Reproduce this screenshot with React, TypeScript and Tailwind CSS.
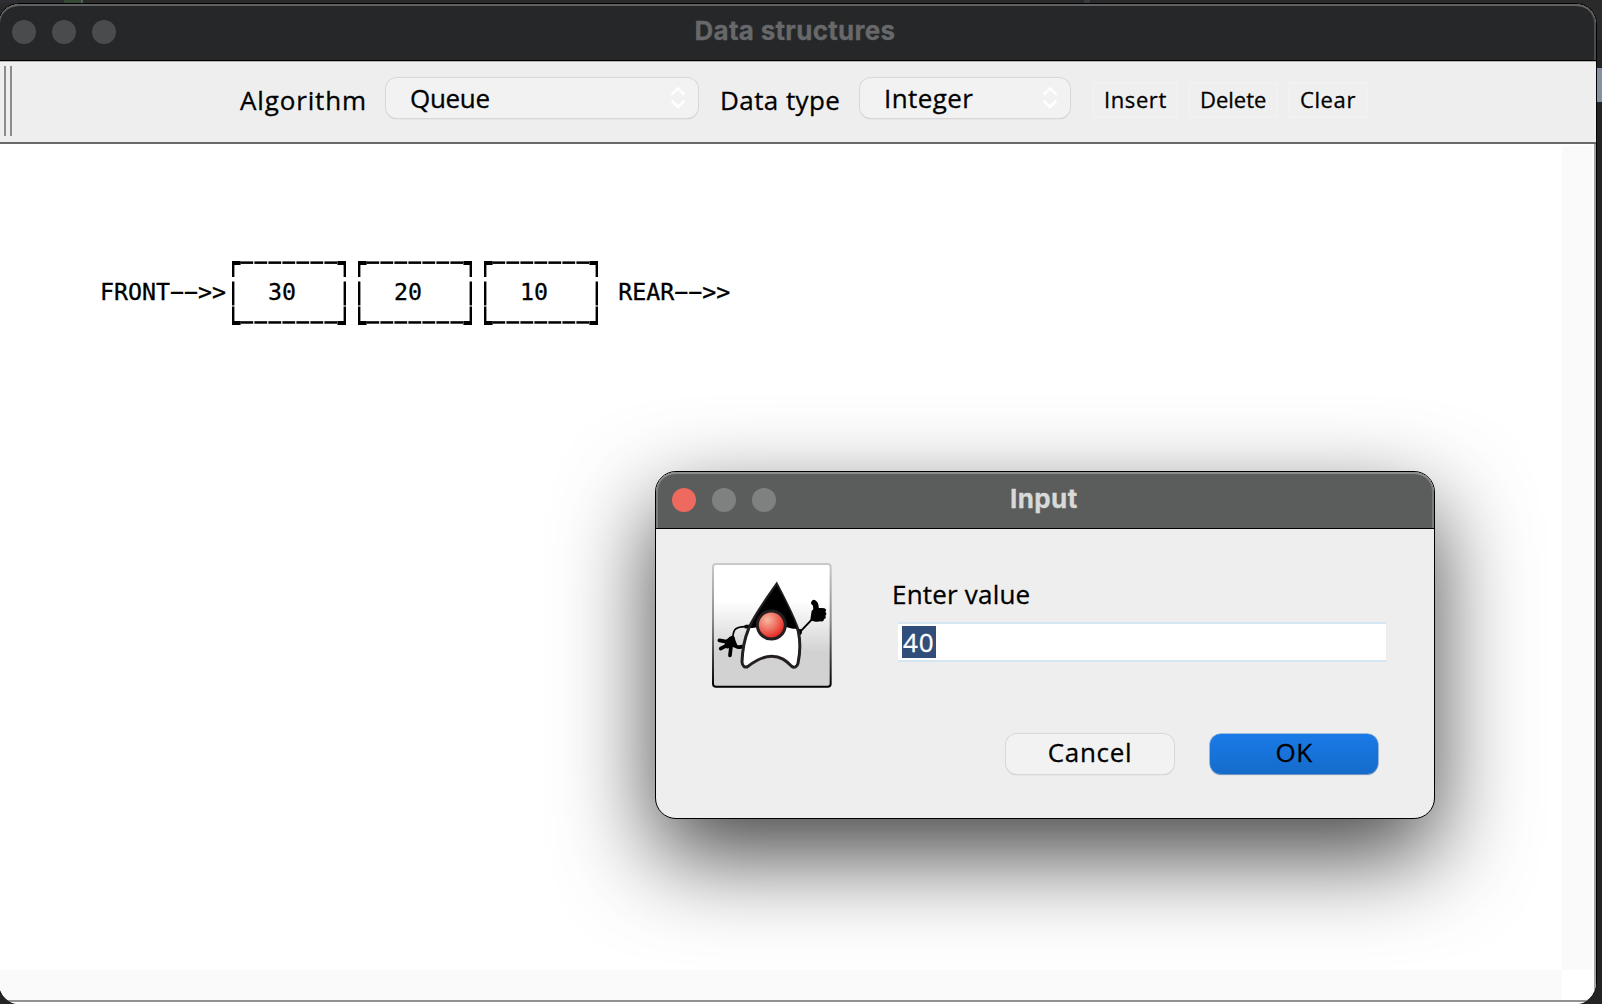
import type { ReactNode } from "react";

function Light({ className }: { className: string }) {
  return <span className={`size-6 rounded-full ${className}`} />;
}

function Chevrons() {
  return (
    <svg width="16" height="24" viewBox="0 0 16 24" fill="none" stroke="#ffffff" strokeWidth="2.6" strokeLinecap="round" strokeLinejoin="round">
      <path d="M2.2 8.2 8 2.4l5.8 5.8M2.2 15.4 8 21.2l5.8-5.8" />
    </svg>
  );
}

function Combo({ className, children }: { className: string; children: ReactNode }) {
  return (
    <div className={`flex h-10 items-center justify-between rounded-[11px] bg-[#f2f2f2] pr-3 shadow-[0_0_0_1px_#d8d8d8,0_1px_1px_#a8a8a8] ${className}`}>
      {children}
      <Chevrons />
    </div>
  );
}

function ToolButton({ className, children }: { className: string; children: ReactNode }) {
  return (
    <button className={`flex h-9 items-center border-2 border-[#f1f1f1] bg-[#efefef] text-[22px] leading-none ${className}`}>
      {children}
    </button>
  );
}

const DASHES = [8.4, 22.4, 36.4, 50.4, 64.4, 78.4, 92.4];

function QueueCell({ value }: { value: string }) {
  return (
    <div className="relative mr-3 flex h-16 w-[114px] items-center pb-0.5 pl-[35.7px]">
      <svg className="absolute inset-0" width="114" height="64" viewBox="0 0 114 64" fill="#000">
        {DASHES.map((x) => (
          <g key={x}>
            <rect x={x} y="0.4" width="12.8" height="2.5" />
            <rect x={x} y="60.2" width="12.8" height="2.5" />
          </g>
        ))}
        <path d="M0 0h8.6v4H2.4v12H0zM114 0h-8.6v4h6.2v12h2.4zM0 64h8.6v-4H2.4V45.6H0zM114 64h-8.6v-4h6.2V45.6h2.4z" />
        <path d="M0 20.4h2.4v24H0zM111.6 20.4h2.4v24h-2.4z" />
      </svg>
      <span>{value}</span>
    </div>
  );
}

function Duke() {
  return (
    <svg width="120" height="125" viewBox="36 39 360 375">
      <defs>
        <linearGradient id="plate" x1="0" y1="0" x2="0" y2="1">
          <stop offset="0.3" stopColor="#ffffff" />
          <stop offset="0.72" stopColor="#d2d2d2" />
        </linearGradient>
        <linearGradient id="rim" x1="0" y1="0" x2="0" y2="1">
          <stop offset="0" stopColor="#c9c9c9" />
          <stop offset="0.45" stopColor="#8c8c8c" />
          <stop offset="1" stopColor="#000000" />
        </linearGradient>
        <radialGradient id="nose" cx="0.36" cy="0.32" r="0.68">
          <stop offset="0" stopColor="#f6b9a2" />
          <stop offset="0.6" stopColor="#ed6456" />
          <stop offset="1" stopColor="#e2231f" />
        </radialGradient>
      </defs>
      <rect x="39" y="42" width="353" height="368" rx="9" fill="url(#plate)" stroke="url(#rim)" strokeWidth="6" />
      <g fill="none" stroke="#000" strokeLinecap="round" strokeLinejoin="round">
        <path d="M144 230c-18-1-34 2-40 10-4 6-5 14-6 24" strokeWidth="5" />
        <path d="M138 230h10" strokeWidth="11" />
        <path d="M298 248 336 208" strokeWidth="6" />
        <path d="M94 278 58 271M92 280 62 296M94 280l-4 36M98 280c8 10 14 14 26 10" strokeWidth="11" />
        <path d="M342 158c8 4 5 14 7 28" strokeWidth="17" />
      </g>
      <path d="M74 272c6-2 12-12 22-15 6 0 10 4 9 10 2 6 4 12 8 20-4 4-10 6-16 4-8 4-16 6-22 2z" />
      <path d="M335 182c8-8 20-9 38-7 6 2 7 7 3 10 4 4 4 9 0 12 3 5 1 10-4 10 0 6-4 9-10 7-11 3-22 1-31-5z" />
      <path d="M294 236l10 2 2 12-8 8z" />
      <path d="M230 103C202 143 166 192 146 236 132 270 127 305 126 336c1 13 9 18 18 13 18-14 42-30 71-30 28 0 43 13 59 29 9 7 18 3 20-8 7-34 8-63 1-96-10-36-41-95-65-141z" fill="#fff" stroke="#231f20" strokeWidth="9" strokeLinejoin="miter" />
      <path d="M230 106C205 143 170 190 151 233c8 2 18-1 26-3l76 0c12 2 26 8 38 6-8-30-38-88-61-130z" />
      <circle cx="214" cy="225" r="42" fill="url(#nose)" stroke="#231f20" strokeWidth="9" />
    </svg>
  );
}

function InputDialog() {
  return (
    <section className="absolute left-[655px] top-[471px] flex h-[348px] w-[780px] flex-col overflow-hidden rounded-[21px] border border-black bg-[#eeeeee] shadow-[0_36px_94px_rgba(0,0,0,0.74)]">
      <header className="flex h-[57px] shrink-0 items-center gap-4 rounded-t-[20px] border-b border-black bg-[#5b5d5c] pl-4 shadow-[inset_0_2px_0_#8b8d8c,inset_2px_0_0_#7b7d7c,inset_-2px_0_0_#7b7d7c]">
        <Light className="bg-[#ee6a5f]" />
        <Light className="bg-[#7f8180]" />
        <Light className="bg-[#7f8180]" />
        <h2 className="ml-[218px] pb-[3px] font-['Inter',sans-serif] text-[26px] font-bold leading-none tracking-[0.4px] text-[#d8d9d9]">Input</h2>
      </header>
      <div className="flex pl-14 pt-[34px]">
        <Duke />
        <div className="ml-[60px] flex flex-col">
          <label className="mt-[17px] text-[26px] leading-7 tracking-[0.2px]">Enter value</label>
          <div className="ml-[6px] mt-[14px] flex h-10 w-[488px] items-center border-y-2 border-[#d5e6f3] bg-white pl-1">
            <span className="flex h-8 w-[34px] items-center bg-[#314d79] pl-px text-[26px] leading-none tracking-[1px] text-white">40</span>
          </div>
        </div>
      </div>
      <div className="mt-[46px] flex justify-end gap-9 pr-[56px] text-[26px] leading-none">
        <button className="flex h-10 w-[168px] items-center justify-center rounded-[11px] bg-[#f2f2f2] pb-1 tracking-[0.7px] shadow-[0_0_0_1px_#d8d8d8,0_1px_1px_#a8a8a8]">Cancel</button>
        <button className="flex h-10 w-[168px] items-center justify-center rounded-[11px] bg-linear-to-b from-[#1a7ae8] to-[#156bcb] pb-1 tracking-[0.5px] shadow-[0_0_0_0.5px_#4b86c9,0_1px_1px_#8a9aad]">OK</button>
      </div>
    </section>
  );
}

export default function App() {
  return (
    <div className="relative h-[1004px] w-[1602px] overflow-hidden bg-[#242424] font-['Open_Sans','Noto_Sans',sans-serif] text-black [-webkit-text-stroke:0.3px]">
      <div className="absolute left-0 top-0 flex h-10 w-full bg-[#2a2a2b]">
        <span className="h-[3px] w-16 bg-[#2c2e31]" />
        <span className="h-[3px] w-[17px] bg-[#344a35]" />
        <span className="h-[3px] w-0.5 bg-[#5b5d5c]" />
        <span className="ml-[1001px] h-[3px] w-1.5 bg-[#3a3b3f]" />
      </div>
      <span className="absolute right-0 top-[68px] h-[34px] w-[6px] bg-[#8391a0]" />

      <main className="absolute -left-0.5 top-[3px] flex h-[1001px] w-[1599px] flex-col overflow-hidden rounded-[21px] border-x border-t border-black bg-white">
        <header className="flex h-[57px] shrink-0 items-center gap-4 rounded-t-[20px] border-b border-black bg-[#262729] pl-[13px] shadow-[inset_0_2px_0_#606162,inset_1px_0_0_#606162,inset_-2px_0_0_#4b4c4d]">
          <Light className="bg-[#4a4b4d]" />
          <Light className="bg-[#4a4b4d]" />
          <Light className="bg-[#4a4b4d]" />
          <h1 className="ml-[562.5px] pb-[3px] font-['Inter',sans-serif] text-[26px] font-bold leading-none tracking-[0.28px] text-[#67686a]">Data structures</h1>
        </header>

        <div className="flex h-[83px] shrink-0 items-center border-b-2 border-t border-b-[#68696b] border-t-[#b5b5b5] bg-[#eeeeee] pb-[9px] pl-[5px] text-[26px] leading-none">
          <span className="mt-[7px] h-[70px] w-2 shrink-0 border-x-2 border-[#8c8c8c]" />
          <span className="ml-[228px] w-[126px] pt-[5px] tracking-[0.85px]">Algorithm</span>
          <Combo className="ml-5 w-[312px] pl-6"><span className="pt-px tracking-[-0.3px]">Queue</span></Combo>
          <span className="ml-[22px] w-[120px] whitespace-nowrap pt-[5px] tracking-[0.42px]">Data type</span>
          <Combo className="ml-5 w-[210px] pl-6"><span className="pt-px tracking-[0.4px]">Integer</span></Combo>
          <div className="ml-[22px] flex gap-2.5 pt-[4px]">
            <ToolButton className="w-[86px] pb-0.5 pl-2.5 tracking-[0.6px]">Insert</ToolButton>
            <ToolButton className="w-[90px] pb-0.5 pl-2.5">Delete</ToolButton>
            <ToolButton className="w-20 pb-0.5 pl-2.5 tracking-[0.6px]">Clear</ToolButton>
          </div>
        </div>

        <div className="flex min-h-0 grow border-b-2 border-r-2 border-b-[#929292] border-r-[#a5a5a5]">
          <div className="flex grow flex-col">
            <div className="flex grow items-start pl-[101px] pt-[117px] font-['DejaVu_Sans_Mono',monospace] text-[23.25px] leading-none">
              <div className="flex h-16 w-[132.3px] items-center pb-0.5">FRONT−−&gt;&gt;</div>
              <QueueCell value="30" />
              <QueueCell value="20" />
              <QueueCell value="10" />
              <div className="ml-2 flex h-16 items-center pb-0.5">REAR−−&gt;&gt;</div>
            </div>
            <div className="h-[30px] bg-[#fafafa]" />
          </div>
          <div className="mb-[30px] mr-0.5 mt-0.5 w-[30px] bg-[#fafafa]" />
        </div>
        <div className="h-0.5 shrink-0 bg-white" />
      </main>

      <InputDialog />
    </div>
  );
}
